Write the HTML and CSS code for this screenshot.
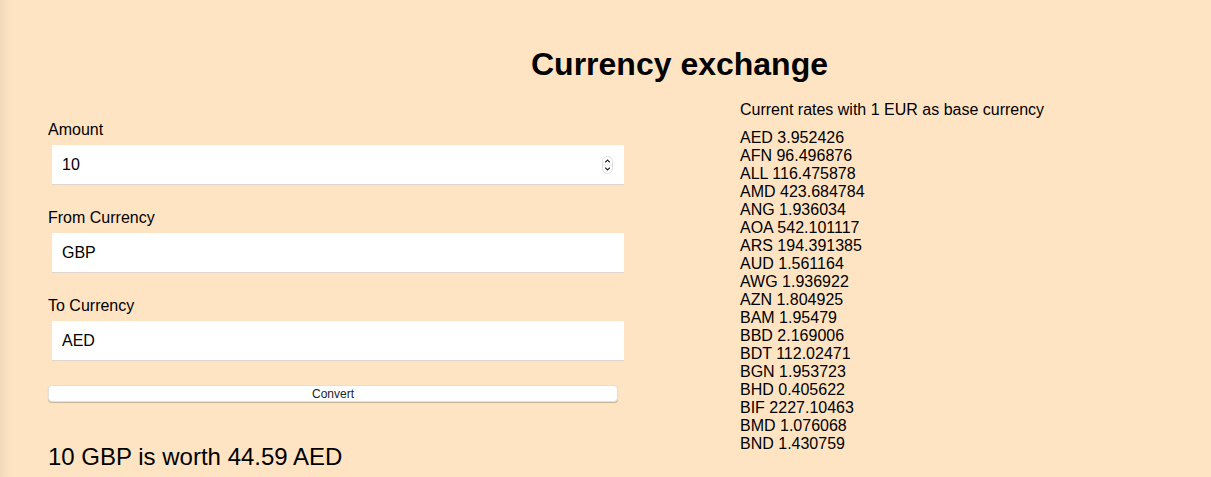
FILE: index.html
```html
<!DOCTYPE html>
<html lang="en">
<head>
<meta charset="utf-8">
<title>Currency exchange</title>
<link rel="stylesheet" href="styles.css">
</head>
<body>
<header class="page-header">
  <h1 class="title">Currency exchange</h1>
</header>
<main class="layout">
  <section class="converter">
    <div class="field">
      <label class="field-label" for="amount">Amount</label>
      <div class="input-wrap">
        <input class="field-input" id="amount" type="text" value="10">
        <span class="spinner" aria-hidden="true">
          <svg width="11" height="18" viewBox="0 0 11 18">
            <rect x="0.5" y="0.5" width="10" height="17" rx="5" fill="#fff" stroke="#dedede"/>
            <line x1="1" y1="9" x2="10" y2="9" stroke="#e6e6e6"/>
            <path d="M3.2 6.3 L5.5 4 L7.8 6.3" fill="none" stroke="#222" stroke-width="1.2"/>
            <path d="M3.2 11.7 L5.5 14 L7.8 11.7" fill="none" stroke="#222" stroke-width="1.2"/>
          </svg>
        </span>
      </div>
    </div>
    <div class="field">
      <label class="field-label" for="from">From Currency</label>
      <div class="input-wrap">
        <input class="field-input" id="from" type="text" value="GBP">
      </div>
    </div>
    <div class="field">
      <label class="field-label" for="to">To Currency</label>
      <div class="input-wrap">
        <input class="field-input" id="to" type="text" value="AED">
      </div>
    </div>
    <button class="convert-btn" type="button">Convert</button>
    <p class="result">10 GBP is worth 44.59 AED</p>
  </section>
  <section class="rates">
    <p class="rates-heading">Current rates with 1 EUR as base currency</p>
    <ul class="rates-list">
      <li>AED 3.952426</li>
      <li>AFN 96.496876</li>
      <li>ALL 116.475878</li>
      <li>AMD 423.684784</li>
      <li>ANG 1.936034</li>
      <li>AOA 542.101117</li>
      <li>ARS 194.391385</li>
      <li>AUD 1.561164</li>
      <li>AWG 1.936922</li>
      <li>AZN 1.804925</li>
      <li>BAM 1.95479</li>
      <li>BBD 2.169006</li>
      <li>BDT 112.02471</li>
      <li>BGN 1.953723</li>
      <li>BHD 0.405622</li>
      <li>BIF 2227.10463</li>
      <li>BMD 1.076068</li>
      <li>BND 1.430759</li>
    </ul>
  </section>
</main>
</body>
</html>
```

FILE: styles.css
```css
html, body {
  margin: 0;
  padding: 0;
}

body {
  font-family: "Liberation Sans", Arial, Helvetica, sans-serif;
  color: #000;
  background: linear-gradient(to right, #f1d8b9 0, #fae0c0 6px, #ffe4c4 14px) #ffe4c4;
  min-height: 100vh;
  overflow: hidden;
}

.page-header {
  padding-left: 148px;
  padding-top: 46px;
  text-align: center;
}

.title {
  margin: 0;
  font-size: 32px;
  line-height: 37px;
  font-weight: 700;
}

.layout {
  display: grid;
  grid-template-columns: 576px 1fr;
  column-gap: 116px;
  padding-left: 48px;
  margin-top: 18px;
}

.converter {
  display: flex;
  flex-direction: column;
  align-items: flex-start;
  padding-top: 20px;
}

.field {
  display: flex;
  flex-direction: column;
  width: 576px;
  margin-bottom: 24px;
}

.field-label {
  font-size: 16px;
  line-height: 18px;
  margin-bottom: 6px;
}

.input-wrap {
  position: relative;
  margin-left: 4px;
  width: 572px;
}

.field-input {
  display: block;
  box-sizing: border-box;
  width: 572px;
  height: 40px;
  margin: 0;
  padding: 1px 10px 0;
  border: none;
  border-bottom: 1px solid #dcd6cf;
  background: #fff;
  font-family: "Liberation Sans", Arial, Helvetica, sans-serif;
  font-size: 16px;
  color: #000;
  outline: none;
}

.spinner {
  position: absolute;
  right: 11px;
  top: 11px;
  display: flex;
}

.convert-btn {
  box-sizing: border-box;
  width: 570px;
  height: 17px;
  margin: 0;
  padding: 1px 0 0;
  border: 1px solid #e2e0de;
  border-radius: 4px;
  background: #fff;
  box-shadow: 0 1px 1px rgba(0, 0, 0, 0.22);
  font-family: "Liberation Sans", Arial, Helvetica, sans-serif;
  font-size: 12px;
  line-height: 14px;
  color: #222;
}

.result {
  margin: 41px 0 0;
  font-size: 24px;
  line-height: 28px;
}

.rates {
  display: flex;
  flex-direction: column;
}

.rates-heading {
  margin: 0 0 10px;
  font-size: 16px;
  line-height: 18px;
}

.rates-list {
  list-style: none;
  margin: 0;
  padding: 0;
  font-size: 16px;
  line-height: 18px;
}
```
